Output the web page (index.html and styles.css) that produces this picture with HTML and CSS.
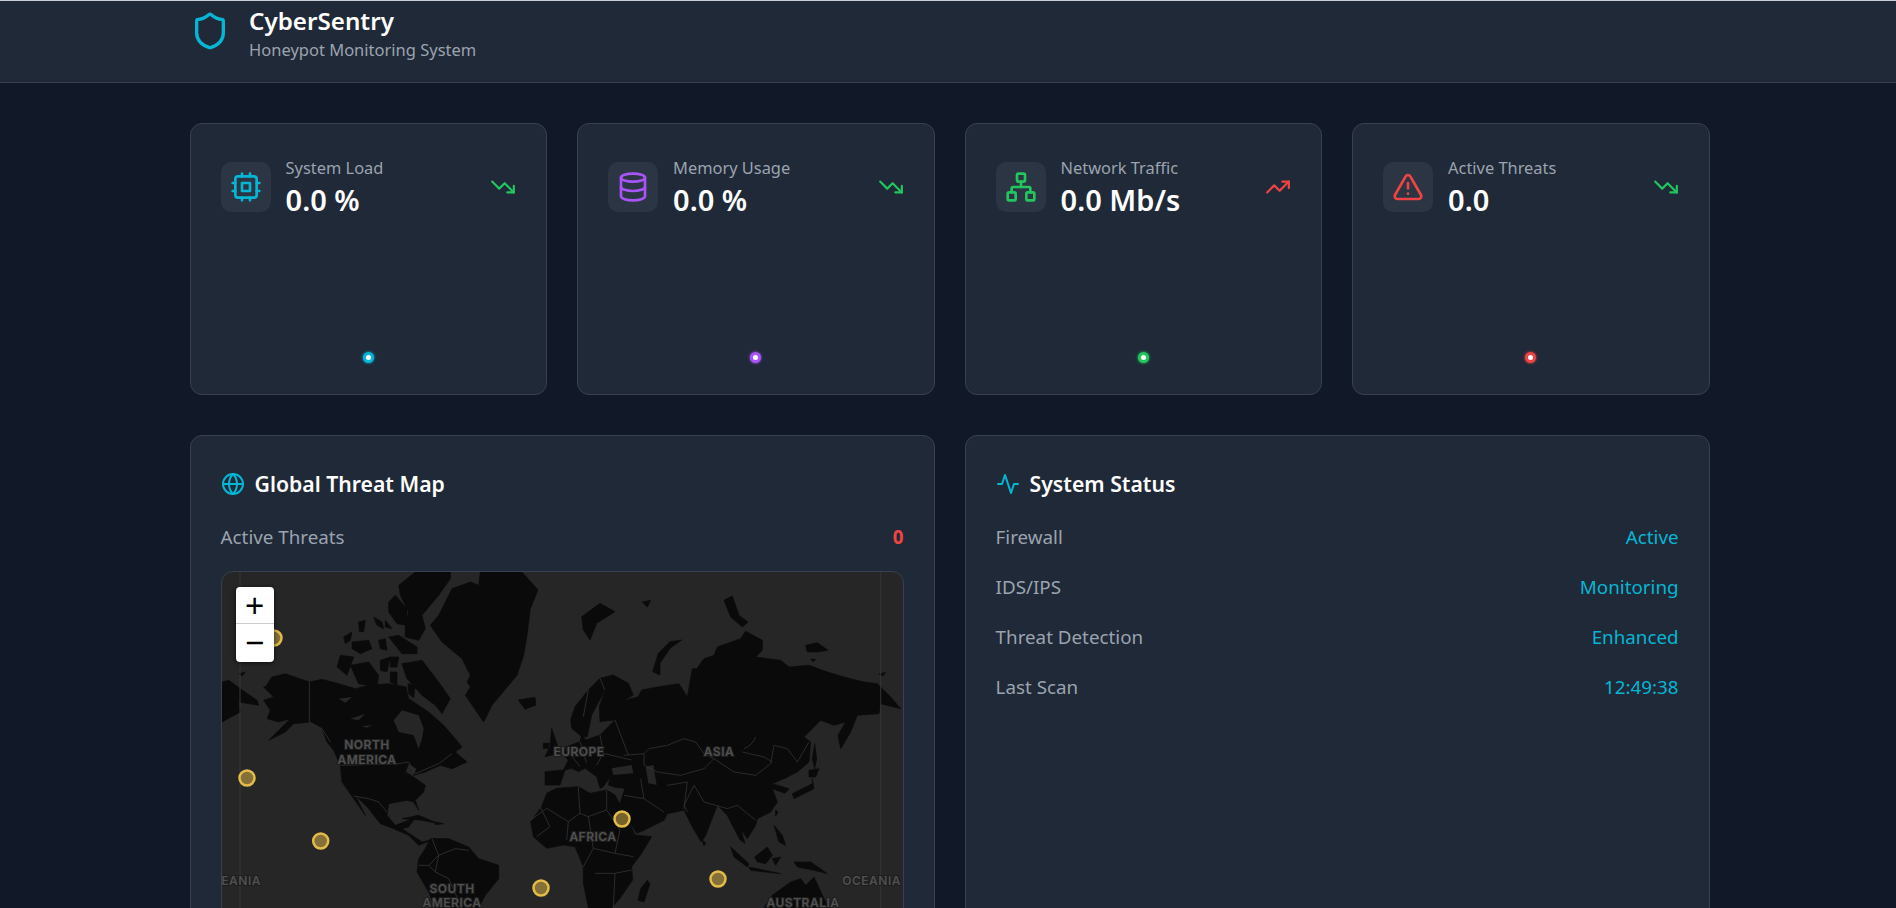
FILE: index.html
```html
<!DOCTYPE html>
<html lang="en">
<head>
  <meta charset="UTF-8">
  <title>CyberSentry</title>
  <link rel="stylesheet" href="styles.css">
</head>
<body>

  <header class="topbar">
    <svg class="logo icon" viewBox="0 0 24 24"><path d="M20 13c0 5-3.500 7.500-7.660 8.950a1 1 0 0 1-.67-.01C7.500 20.500 4 18 4 13V6a1 1 0 0 1 1-1c2 0 4.500-1.200 6.240-2.720a1.170 1.170 0 0 1 1.520 0C14.510 3.810 17 5 19 5a1 1 0 0 1 1 1z"/></svg>
    <div>
      <h1>CyberSentry</h1>
      <p>Honeypot Monitoring System</p>
    </div>
  </header>

  <main class="page">
    <section class="cards">
      <div class="card">
        <div class="card-top">
          <div class="icon-box cyan">
            <svg class="icon" viewBox="0 0 24 24"><rect x="4" y="4" width="16" height="16" rx="2"/><rect x="9" y="9" width="6" height="6"/><path d="M15 2v2M15 20v2M2 15h2M2 9h2M20 15h2M20 9h2M9 2v2M9 20v2"/></svg>
          </div>
          <div class="card-text">
            <div class="card-label">System Load</div>
            <div class="card-value">0.0 %</div>
          </div>
          <svg class="icon trend green" viewBox="0 0 24 24"><polyline points="22 17 13.500 8.500 8.500 13.500 2 7"/><polyline points="16 17 22 17 22 11"/></svg>
        </div>
        <div class="chart"><span class="dot dot-cyan"></span></div>
      </div>

      <div class="card">
        <div class="card-top">
          <div class="icon-box purple">
            <svg class="icon" viewBox="0 0 24 24"><ellipse cx="12" cy="5" rx="9" ry="3"/><path d="M3 5v14a9 3 0 0 0 18 0V5"/><path d="M3 12a9 3 0 0 0 18 0"/></svg>
          </div>
          <div class="card-text">
            <div class="card-label">Memory Usage</div>
            <div class="card-value">0.0 %</div>
          </div>
          <svg class="icon trend green" viewBox="0 0 24 24"><polyline points="22 17 13.500 8.500 8.500 13.500 2 7"/><polyline points="16 17 22 17 22 11"/></svg>
        </div>
        <div class="chart"><span class="dot dot-purple"></span></div>
      </div>

      <div class="card">
        <div class="card-top">
          <div class="icon-box green">
            <svg class="icon" viewBox="0 0 24 24"><rect x="16" y="16" width="6" height="6" rx="1"/><rect x="2" y="16" width="6" height="6" rx="1"/><rect x="9" y="2" width="6" height="6" rx="1"/><path d="M5 16v-3a1 1 0 0 1 1-1h12a1 1 0 0 1 1 1v3"/><path d="M12 12V8"/></svg>
          </div>
          <div class="card-text">
            <div class="card-label">Network Traffic</div>
            <div class="card-value">0.0 Mb/s</div>
          </div>
          <svg class="icon trend red" viewBox="0 0 24 24"><polyline points="22 7 13.500 15.500 8.500 10.500 2 17"/><polyline points="16 7 22 7 22 13"/></svg>
        </div>
        <div class="chart"><span class="dot dot-green"></span></div>
      </div>

      <div class="card">
        <div class="card-top">
          <div class="icon-box red">
            <svg class="icon" viewBox="0 0 24 24"><path d="m21.730 18-8-14a2 2 0 0 0-3.480 0l-8 14A2 2 0 0 0 4 21h16a2 2 0 0 0 1.730-3"/><path d="M12 9v4"/><path d="M12 17h.01"/></svg>
          </div>
          <div class="card-text">
            <div class="card-label">Active Threats</div>
            <div class="card-value">0.0</div>
          </div>
          <svg class="icon trend green" viewBox="0 0 24 24"><polyline points="22 17 13.500 8.500 8.500 13.500 2 7"/><polyline points="16 17 22 17 22 11"/></svg>
        </div>
        <div class="chart"><span class="dot dot-red"></span></div>
      </div>
    </section>

    <section class="panels">
      <div class="panel">
        <h2><svg class="icon cyan" viewBox="0 0 24 24"><circle cx="12" cy="12" r="10"/><path d="M12 2a14.500 14.500 0 0 0 0 20 14.500 14.500 0 0 0 0-20"/><path d="M2 12h20"/></svg>Global Threat Map</h2>
        <div class="row"><span>Active Threats</span><b class="count">0</b></div>

        <div class="map">
          <svg class="map-svg" viewBox="0 0 681 400">
            <!-- americas and greenland -->
            <g class="land" transform="scale(.33333)">
              <path d="M130 345L150 315 190 305 262 330 300 322 350 335 400 350 440 340 500 335 552 345 560 380 620 420 665 460 700 500 720 525 700 540 735 570 690 590 655 580 610 600 575 610 585 590 560 575 550 600 575 615 610 640 605 660 580 685 590 715 575 690 555 685 500 695 495 730 520 760 560 745 585 730 560 765 540 770 600 810 640 800 590 820 560 790 515 770 475 755 440 710 410 680 400 670 420 710 430 730 395 680 360 630 355 580 335 535 315 510 300 470 265 450 215 455 190 480 140 505 175 470 205 440 170 450 135 440 145 415 125 385 155 375 125 345Z"/>
              <path d="M540 275L600 265 650 330 685 380 660 425 640 400 600 370 555 320ZM385 280L440 270 470 310 465 345 410 335ZM355 250L395 255 375 310 345 285ZM505 300L525 300 525 340 505 330ZM475 265L505 255 495 300 475 295ZM505 255L530 255 525 285 505 285ZM365 195L390 180 385 205 370 215ZM390 210L440 205 450 230 415 245 390 230ZM470 205L490 200 495 235 475 230ZM410 150L430 145 425 180 412 178ZM455 135L480 150 485 170 465 160ZM490 145L510 170 490 165ZM500 195L530 190 585 225 585 245 540 245 520 220ZM530 40L580 0 685 0 685 20 650 70 600 130 610 170 590 205 550 195 550 160 560 120 535 70ZM500 90L520 70 555 110 555 160 525 155 500 120ZM558 335L580 340 575 378 560 365ZM600 350L620 350 615 370 605 370ZM555 395L590 405 570 412Z"/>
              <path d="M775 0L900 0 948 54 925 110 915 190 905 250 885 310 835 370 810 400 785 450 730 370 745 345 735 330 745 310 720 260 660 210 625 160 650 130 690 50 745 30 770 40Z"/>
              <path d="M0 330L20 325 55 350 105 385 110 400 50 390 55 420 0 450ZM50 305L70 300 60 312Z"/>
              <path d="M625 800L680 800 740 825 770 860 830 880 830 920 790 970 770 1008 640 1008 620 960 585 900 590 860 610 830Z"/>
              <path d="M540 740L590 730 650 755 600 745ZM640 750L665 755 640 758Z"/>
              <path class="sea" d="M515 445L540 415 590 430 605 470 600 500 590 530 575 490 530 480ZM350 380L390 375 370 392ZM385 440L430 425 410 445ZM420 462L450 460 435 467Z"/>
              <path class="border" d="M262 330V450L300 470 325 510M355 580L530 575 560 570 580 605 650 575 690 545M395 672L440 680 470 690 495 720M630 800L650 850 620 880 590 880M650 850L700 830 740 835M650 850L640 900 680 920 720 1008M620 880L640 900"/>
            </g>

            <!-- europe, africa and asia -->
            <g class="land" transform="translate(278 68) scale(.33333)">
              <path d="M212 240L225 200 265 150 300 115 340 105 385 130 400 165 370 182 415 170 425 150 472 141 537 131 562 171 577 86 590 86 612 56 642 46 652 21 722 -4 737 -26 787 1 787 31 767 51 842 61 867 81 927 76 982 96 1032 111 1092 126 1132 131 1172 171 1202 206 1142 191 1137 221 1072 226 1052 276 1022 326 1014 286 1037 246 1002 256 962 241 912 291 932 306 927 366 892 396 852 416 817 431 867 446 855 460 817 446 832 486 812 516 772 536 767 556 742 596 722 566 735 610 720 600 697 556 682 526 652 496 617 586 604 606 577 561 552 511 502 521 492 541 432 571 410 580 385 540 360 490 375 445 345 442 325 435 330 412 310 440 300 445 290 410 255 385 235 395 215 385 195 390 180 435 135 435 135 395 190 390 205 360 185 340 195 322 240 305 245 285 258 300 300 285 330 255 345 240 300 245 298 200 315 150 275 225 262 290 245 290 215 265Z"/>
              <path d="M155 265L172 315 178 340 135 350 150 320ZM130 310L148 310 145 325 130 325ZM55 180L105 172 108 195 75 208ZM545 0L510 5 475 40 458 95 480 105 480 70 510 25ZM245 -70L300 -110 345 -85 290 -50 270 0 250 -30Z"/>
              <path d="M92 545L125 500 140 460 170 445 235 440 270 460 320 450 345 465 385 540 405 585 455 590 425 640 395 680 398 720 360 775 335 804 265 804 250 730 250 680 225 620 190 615 140 625 100 590Z"/>
              <path class="sea" d="M335 385L395 375 400 400 340 405ZM437 380L460 375 470 435 445 430Z"/>
              <path class="border" d="M140 505L205 545 240 520 235 440M240 520L265 530 320 510 320 450M320 510L360 570 345 640M205 545L200 600M265 530L280 625 345 640 400 650M280 625L250 680M285 700L345 700 395 690M345 700L340 804M92 540L140 505M120 500L150 560 110 590M195 322L240 380M240 305L260 370M300 285L310 340 395 360M310 340L290 375M345 240L385 345M265 150L250 230M300 115L315 150"/>
            </g>

            <!-- asian islands, borders and australia -->
            <g class="land" transform="translate(402 0) scale(.33333)">
              <path d="M55 90L80 85 70 105ZM300 85L325 72 345 130 372 150 355 165 320 135ZM545 220L580 212 612 235 580 240 550 240ZM560 262L575 262 568 270ZM765 305L785 302 775 312ZM572 515L578 560 572 590 565 560ZM555 595L585 590 575 615 555 615ZM505 665L565 635 565 620 570 650 510 680ZM455 715L462 720 455 732ZM450 760L475 790 485 820 465 810ZM235 805L245 812 240 822ZM320 825L375 875 370 885 330 855ZM375 885L470 905 380 895ZM392 855L430 825 445 850 425 875 400 870ZM445 860L470 855 455 880ZM510 870L560 870 610 905 570 895 520 885ZM70 925L78 935 60 990 42 985 50 950Z"/>
              <path d="M420 1008L445 970 500 930 530 920 545 940 570 915 605 990 615 1008Z"/>
              <path class="border" d="M0 550L60 545 75 530 130 520 180 500 215 510 240 545 270 560 330 600 395 610 440 575 450 520 490 530 520 570 555 510M355 540L420 555 445 570M60 545L60 580 100 600 170 610 240 590 270 560M210 640L240 690 310 710 340 700 395 745M210 640L180 700 190 720M50 620L60 680 120 720M130 640L190 630 180 710M0 670L60 680M395 495Q385 520 360 530"/>
            </g>

            <!-- date line -->
            <path class="dateline" d="M18 0V400M658.700 0V400"/>

            <g class="labels">
              <text x="145" y="177">NORTH</text>
              <text x="145" y="192">AMERICA</text>
              <text x="357" y="184">EUROPE</text>
              <text x="497" y="184">ASIA</text>
              <text x="371" y="269">AFRICA</text>
              <text x="230" y="321">SOUTH</text>
              <text x="230" y="335">AMERICA</text>
              <text x="581" y="335">AUSTRALIA</text>
              <text class="end" x="39" y="313">OCEANIA</text>
              <text class="end" x="679" y="313">OCEANIA</text>
            </g>
            <g class="pins">
              <circle cx="52" cy="66" r="7.500"/>
              <circle cx="25" cy="206" r="7.500"/>
              <circle cx="98.700" cy="269" r="7.500"/>
              <circle cx="400" cy="247" r="7.500"/>
              <circle cx="319" cy="316" r="7.500"/>
              <circle cx="496" cy="307" r="7.500"/>
            </g>
          </svg>
          <div class="zoom-ctrl">
            <a>+</a>
            <a>−</a>
          </div>
        </div>
      </div>

      <div class="panel">
        <h2><svg class="icon cyan" viewBox="0 0 24 24"><path d="M22 12h-4l-3 9L9 3l-3 9H2"/></svg>System Status</h2>
        <div class="row"><span>Firewall</span><span class="status">Active</span></div>
        <div class="row"><span>IDS/IPS</span><span class="status">Monitoring</span></div>
        <div class="row"><span>Threat Detection</span><span class="status">Enhanced</span></div>
        <div class="row"><span>Last Scan</span><span class="status">12:49:38</span></div>
      </div>
    </section>
  </main>

</body>
</html>
```

FILE: styles.css
```css
html {
  overflow: hidden;
}
body {
  margin: 0;
  height: 908px;
  overflow: hidden;
  background-color: #111827;
  color: #fff;
  font-family: "Noto Sans", Arial, sans-serif;
}
.icon {
  fill: none;
  stroke: currentColor;
  stroke-width: 2;
  stroke-linecap: round;
  stroke-linejoin: round;
  flex: none;
}
.cyan { color: #06b6d4; }
.purple { color: #a855f7; }
.green { color: #22c55e; }
.red { color: #ef4444; }

.topbar {
  display: flex;
  gap: 19px;
  height: 81px;
  padding-left: 190px;
  background-color: #1f2937;
  border-top: 1px solid #c9ced6;
  border-bottom: 1px solid #374151;
}
.logo {
  width: 40px;
  height: 40px;
  margin-top: 10px;
  color: #06b6d4;
}
.topbar h1 {
  margin: 4px 0 0;
  font-size: 24.200px;
  line-height: 32px;
  font-weight: 600;
}
.topbar p {
  margin: 1px 0 0;
  font-size: 16.500px;
  line-height: 24px;
  color: #9ca3af;
}

.page {
  width: 1520px;
  margin-left: 189.600px;
  padding-top: 40px;
}
.cards {
  display: grid;
  grid-template-columns: repeat(4, 1fr);
  gap: 30px;
}
.card {
  display: flex;
  flex-direction: column;
  box-sizing: border-box;
  height: 272px;
  padding: 38px 30px 31px;
  background-color: #1f2937;
  border: 1px solid #374151;
  border-radius: 12px;
}
.card-top {
  display: flex;
  align-items: center;
  height: 50px;
}
.icon-box {
  display: flex;
  align-items: center;
  justify-content: center;
  width: 50px;
  height: 50px;
  border-radius: 10px;
  background-color: #2b3543;
}
.icon-box svg {
  width: 32px;
  height: 32px;
}
.card-text {
  flex: 1;
  margin-left: 15px;
}
.card-label {
  margin-bottom: 2px;
  font-size: 16.400px;
  line-height: 24px;
  color: #9ca3af;
}
.card-value {
  font-size: 29px;
  line-height: 36px;
  font-weight: 600;
}
.trend {
  width: 26px;
  height: 26px;
}
.chart {
  flex: 1;
  display: flex;
  align-items: flex-end;
  justify-content: center;
}
.dot {
  width: 5px;
  height: 5px;
  border-radius: 50%;
  background-color: #fff;
  border: 3px solid;
}
.dot-cyan { border-color: #06b6d4; box-shadow: 0 0 3px #06b6d4; }
.dot-purple { border-color: #a855f7; box-shadow: 0 0 3px #a855f7; }
.dot-green { border-color: #22c55e; box-shadow: 0 0 3px #22c55e; }
.dot-red { border-color: #ef4444; box-shadow: 0 0 3px #ef4444; }

.panels {
  display: grid;
  grid-template-columns: 1fr 1fr;
  gap: 30px;
  margin-top: 40px;
}
.panel {
  box-sizing: border-box;
  height: 600px;
  padding: 30px;
  background-color: #1f2937;
  border: 1px solid #374151;
  border-radius: 12px;
}
.panel h2 {
  display: flex;
  align-items: center;
  gap: 10px;
  margin: 0 0 22px;
  font-size: 21.200px;
  line-height: 36px;
  font-weight: 600;
}
.panel h2 svg {
  width: 24px;
  height: 24px;
}
.row {
  display: flex;
  justify-content: space-between;
  margin-bottom: 24px;
  font-size: 18.800px;
  line-height: 26px;
  color: #9ca3af;
}
.count {
  color: #ef4444;
}
.status {
  color: #06b6d4;
}

.map {
  position: relative;
  height: 400px;
  margin-top: -3px;
  overflow: hidden;
  background-color: #262626;
  border: 1px solid #374151;
  border-radius: 12px;
}
.map-svg {
  display: block;
  width: 681px;
  height: 400px;
}
.land {
  filter: blur(.35px);
}
.land path {
  fill: #0a0a0a;
  stroke: #0a0a0a;
  stroke-width: 2;
  stroke-linejoin: round;
}
.land .sea {
  fill: #262626;
  stroke: none;
}
.land .border {
  fill: none;
  stroke: #333;
  stroke-width: 2.400;
}
.dateline {
  fill: none;
  stroke: #363636;
  stroke-width: 1;
}
.labels text {
  font-family: Inter, Arial, sans-serif;
  font-size: 12px;
  font-weight: 600;
  letter-spacing: .5px;
  fill: #505050;
  stroke: #1d1d1d;
  stroke-width: 2px;
  paint-order: stroke;
  text-anchor: middle;
}
.labels .end {
  text-anchor: end;
}
.pins circle {
  fill: #e3bc4a;
  fill-opacity: .5;
  stroke: #e3bc4a;
  stroke-width: 2.500;
}
.zoom-ctrl {
  position: absolute;
  top: 15px;
  left: 14px;
  width: 38px;
  border-radius: 4px;
  background-color: #fff;
  box-shadow: 0 1px 5px rgba(0, 0, 0, .65);
}
.zoom-ctrl a {
  display: block;
  height: 38px;
  font-family: "Liberation Sans", Arial, sans-serif;
  font-size: 33px;
  font-weight: 400;
  line-height: 37px;
  text-align: center;
  color: #000;
}
.zoom-ctrl a:first-child {
  height: 36px;
  border-bottom: 1px solid #ccc;
}
```
